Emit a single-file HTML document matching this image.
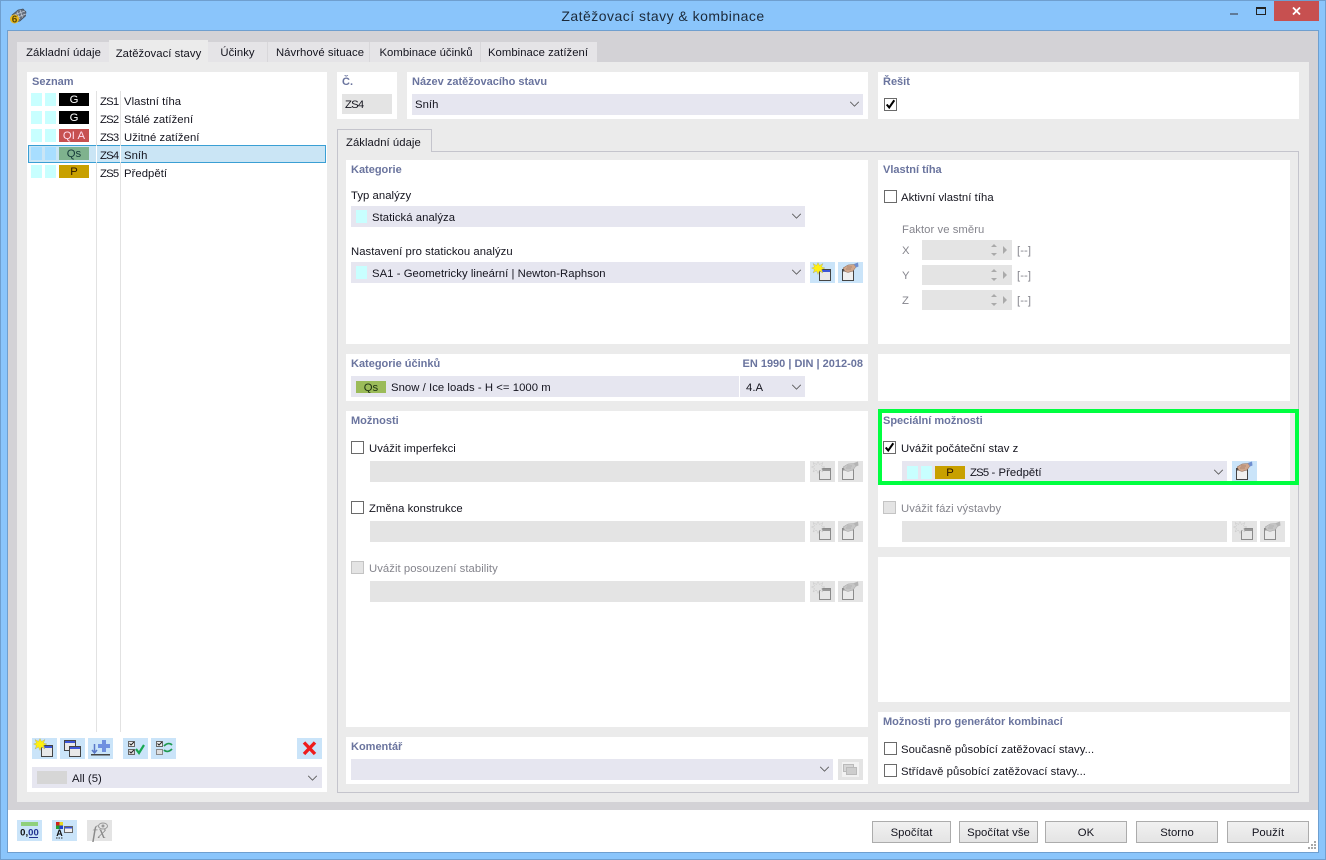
<!DOCTYPE html>
<html lang="cs"><head><meta charset="utf-8"><title>Zatěžovací stavy &amp; kombinace</title>
<style>
html,body{margin:0;padding:0;width:1326px;height:860px;overflow:hidden;background:#8ac5fb}
body{position:relative;font-family:"Liberation Sans",sans-serif;font-size:11.3px;letter-spacing:.05px;color:#14141e}
div,span,svg{position:absolute;box-sizing:border-box}
.t{white-space:nowrap;line-height:16px}
.z{letter-spacing:-.8px}
.h{white-space:nowrap;line-height:16px;font-weight:bold;color:#6a749e;font-size:11px;letter-spacing:0}
.w{background:#fff}
.f{background:#e6e6f0;height:21px}
.d{background:#e4e4e4;height:21px}
.g{color:#85858d}
.b{width:25px;height:21px;background:#cae4f9}
.b.x{background:#e4e4e4}
.b.x svg{filter:grayscale(1);opacity:.55}
.c{width:13px;height:13px;background:#fff;border:1px solid #6a6a6a}
.c.x{background:#e4e4e4;border-color:#c4c4c4}
.s{width:11px;height:13px;background:#c8ffff}
.chip{width:30px;height:13px;text-align:center;line-height:15px;font-size:11.3px;overflow:hidden}
.tab{top:42px;height:20px;background:#e5e4e7;line-height:23px;text-align:center;white-space:nowrap}
.btn{top:821px;height:22px;background:linear-gradient(#f1f1f1,#e4e4e4);border:1px solid #acacac;text-align:center;line-height:22px;white-space:nowrap}
.ck{left:0;top:0}
</style></head><body>
<svg width="0" height="0" style="left:0;top:0">
<defs>
<symbol id="chev" viewBox="0 0 12 7"><path d="M1 1L6 6L11 1" fill="none" stroke="#555" stroke-width="1"/></symbol>
<symbol id="new" viewBox="0 0 25 21"><rect x="9.500" y="7.500" width="11" height="11" fill="#e8e8e8" stroke="#444"/><rect x="10" y="8" width="10" height="2" fill="#3a55d8"/><path d="M8 .5L9.500 3.500L13 1.500L11.500 5L15 6L11.500 7.500L13 11L9.500 9L8 12.500L6.500 9L3 11L4.500 7.500L1.500 6L4.500 5L3 1.500L6.500 3.500Z" fill="#ffef10" stroke="#a8a878" stroke-width=".4"/></symbol>
<symbol id="edit" viewBox="0 0 25 21"><rect x="4.500" y="7.500" width="11" height="11" fill="#f0f0f0" stroke="#444"/><path d="M5 8h10v1.500H5z" fill="#555"/><path d="M5 6L10 3L16 2.500L18 5L15 9L10 10.500L7 9.500Z" fill="#cfa68c" stroke="#8a6a58" stroke-width=".5"/><path d="M9 5h5M8 7h5" stroke="#8a6a58" stroke-width=".5"/><path d="M16 2L20 .5L20.500 4.500L18 5.500Z" fill="#6f8fd0"/></symbol>
<symbol id="copy" viewBox="0 0 25 21"><rect x="4.500" y="2.500" width="11" height="10" fill="#e8e8e8" stroke="#444"/><rect x="5" y="3" width="10" height="2" fill="#3a55d8"/><rect x="9.500" y="8.500" width="11" height="10" fill="#e8e8e8" stroke="#444"/><rect x="10" y="9" width="10" height="2" fill="#3a55d8"/></symbol>
<symbol id="imp" viewBox="0 0 25 21"><path d="M14 2h4v4h4v4h-4v4h-4v-4h-4V6h4z" fill="#6f8fe0"/><path d="M6.500 6v9M4 12l2.500 3 2.500-3" fill="none" stroke="#5a78c8" stroke-width="1.500"/><rect x="3" y="16" width="19" height="1.500" fill="#444"/></symbol>
<symbol id="chk" viewBox="0 0 25 21"><rect x="5.500" y="3.500" width="6" height="5" fill="#eee" stroke="#666"/><rect x="5.500" y="11.500" width="6" height="5" fill="#ddd" stroke="#666"/><path d="M6.500 5.500l1.500 1.500 3-3M6.500 13.500l1.500 1.500 3-3" fill="none" stroke="#222"/><path d="M13 11l3 4 5-8" fill="none" stroke="#18a850" stroke-width="2.200"/></symbol>
<symbol id="tog" viewBox="0 0 25 21"><rect x="5.500" y="3.500" width="6" height="5" fill="#eee" stroke="#666"/><rect x="5.500" y="11.500" width="6" height="5" fill="#ddd" stroke="#888"/><path d="M6.500 5.500l1.500 1.500 3-3" fill="none" stroke="#222"/><path d="M13 8c3-3 6-3 8-1M21 11c-3 3-6 3-8 1" fill="none" stroke="#1f9a50" stroke-width="1.800"/></symbol>
<symbol id="del" viewBox="0 0 25 21"><path d="M7 4.500L18 16M18 4.500L7 16" stroke="#ee1c1c" stroke-width="3.400" fill="none"/></symbol>
<symbol id="tick" viewBox="0 0 13 13"><path d="M2 6.500L5 10L11 1.500" fill="none" stroke="#000" stroke-width="2.400"/></symbol>
<symbol id="cmt" viewBox="0 0 25 21"><rect x="4" y="3" width="17" height="15" fill="#fff"/><rect x="5.500" y="5.500" width="10" height="7" fill="#ccc" stroke="#999"/><rect x="8.500" y="8.500" width="10" height="7" fill="#bbb" stroke="#999"/></symbol>
</defs></svg>

<!-- window frame -->
<div style="left:0;top:0;width:1326px;height:1px;background:#6f9fcf"></div>
<div style="left:0;top:0;width:1px;height:860px;background:#6f9fcf"></div>
<div style="left:1325px;top:0;width:1px;height:860px;background:#6f9fcf"></div>
<div style="left:0;top:859px;width:1326px;height:1px;background:#6f9fcf"></div>
<div style="left:7px;top:30px;width:1312px;height:823px;background:#fff;border:1px solid #6f9fcf"></div>
<div style="left:8px;top:31px;width:1310px;height:779px;background:#d3d2d6"></div>

<!-- app icon -->
<svg style="left:9px;top:7px" width="18" height="18" viewBox="0 0 18 18"><path d="M3 8L9 3L14 2L17 5L16.500 9L11 14L7 15Z" fill="#66707e" stroke="#3c4450" stroke-width=".6"/><path d="M8 4.500L10.500 12M11 3L13.500 10.500M5 8L16 4M6 11L17 7" stroke="#c4ccd8" stroke-width=".7"/><circle cx="5.500" cy="12" r="4.500" fill="#e8b820"/><text x="5.500" y="15.500" font-size="10" font-weight="bold" text-anchor="middle" fill="#5a4800" font-family="Liberation Sans">6</text></svg>
<div class="t" style="left:0;width:1326px;top:8px;text-align:center;font-size:14px;line-height:16px;letter-spacing:.48px;color:#1c2a3a">Zatěžovací stavy &amp; kombinace</div>
<div style="left:1230px;top:13px;width:8px;height:2px;background:#5f7a98"></div>
<div style="left:1256px;top:7px;width:10px;height:8px;border:1px solid #222;border-top:2px solid #222"></div>
<div style="left:1274px;top:1px;width:45px;height:20px;background:#c75050"></div>
<svg style="left:1292px;top:7px" width="9" height="8" viewBox="0 0 9 8"><path d="M1 .5L8 7.500M8 .5L1 7.500" stroke="#fff" stroke-width="1.800"/></svg>

<!-- main tabs -->
<div style="left:17px;top:42px;width:580px;height:20px;background:#e5e4e7"></div>
<div class="tab" style="left:18px;width:91px">Základní údaje</div>
<div class="tab" style="left:109px;top:40px;height:23px;width:99px;background:#ebebeb;line-height:28px">Zatěžovací stavy</div>
<div class="tab" style="left:208px;width:59px">Účinky</div>
<div class="tab" style="left:268px;width:102px;padding-left:2px">Návrhové situace</div>
<div style="left:267px;top:42px;width:1px;height:20px;background:#d8d7da"></div>
<div style="left:369px;top:42px;width:1px;height:20px;background:#d8d7da"></div>
<div style="left:480px;top:42px;width:1px;height:20px;background:#d8d7da"></div>
<div class="tab" style="left:370px;width:110px;padding-left:2px;background:none">Kombinace účinků</div>
<div class="tab" style="left:481px;width:116px;padding-right:2px">Kombinace zatížení</div>
<div style="left:17px;top:62px;width:1292px;height:740px;background:#ebebeb"></div>

<!-- left panel -->
<div class="w" style="left:27px;top:72px;width:300px;height:720px"></div>
<div class="h" style="left:32px;top:74px">Seznam</div>
<div style="left:28px;top:145px;width:298px;height:18px;background:#cae5f5;border:1px solid #3a9fd4"></div>
<div style="left:96px;top:91px;width:1px;height:641px;background:#e2e2e2"></div>
<div style="left:120px;top:91px;width:1px;height:641px;background:#e2e2e2"></div>
<div style="left:96px;top:146px;width:1px;height:16px;background:#fff"></div>
<div style="left:120px;top:146px;width:1px;height:16px;background:#fff"></div>

<div class="s" style="left:31px;top:93px"></div><div class="s" style="left:45px;top:93px"></div>
<div class="chip" style="left:59px;top:93px;background:#000;color:#fff">G</div>
<div class="t z" style="left:100px;top:94px">ZS1</div><div class="t" style="left:124px;top:94px">Vlastní tíha</div>
<div class="s" style="left:31px;top:111px"></div><div class="s" style="left:45px;top:111px"></div>
<div class="chip" style="left:59px;top:111px;background:#000;color:#fff">G</div>
<div class="t z" style="left:100px;top:112px">ZS2</div><div class="t" style="left:124px;top:112px">Stálé zatížení</div>
<div class="s" style="left:31px;top:129px"></div><div class="s" style="left:45px;top:129px"></div>
<div class="chip" style="left:59px;top:129px;background:#c75050;color:#fde">QI A</div>
<div class="t z" style="left:100px;top:130px">ZS3</div><div class="t" style="left:124px;top:130px">Užitné zatížení</div>
<div class="s" style="left:31px;top:147px;background:#a8deff"></div><div class="s" style="left:45px;top:147px;background:#a8deff"></div>
<div class="chip" style="left:59px;top:147px;background:#7fb28e;color:#163a3a">Qs</div>
<div class="t z" style="left:100px;top:148px">ZS4</div><div class="t" style="left:124px;top:148px">Sníh</div>
<div class="s" style="left:31px;top:165px"></div><div class="s" style="left:45px;top:165px"></div>
<div class="chip" style="left:59px;top:165px;background:#c8a000;color:#2a1500">P</div>
<div class="t z" style="left:100px;top:166px">ZS5</div><div class="t" style="left:124px;top:166px">Předpětí</div>

<div class="b" style="left:32px;top:738px"><svg class="ck" width="25" height="21"><use href="#new"/></svg></div>
<div class="b" style="left:60px;top:738px"><svg class="ck" width="25" height="21"><use href="#copy"/></svg></div>
<div class="b" style="left:88px;top:738px"><svg class="ck" width="25" height="21"><use href="#imp"/></svg></div>
<div class="b" style="left:123px;top:738px"><svg class="ck" width="25" height="21"><use href="#chk"/></svg></div>
<div class="b" style="left:151px;top:738px"><svg class="ck" width="25" height="21"><use href="#tog"/></svg></div>
<div class="b" style="left:297px;top:738px"><svg class="ck" width="25" height="21"><use href="#del"/></svg></div>
<div class="f" style="left:32px;top:767px;width:290px"></div>
<div style="left:37px;top:771px;width:30px;height:13px;background:#d6d6d6"></div>
<div class="t" style="left:72px;top:771px">All (5)</div>
<svg style="left:307px;top:775px" width="11" height="6"><use href="#chev"/></svg>

<!-- top row -->
<div class="w" style="left:337px;top:72px;width:60px;height:47px"></div>
<div class="h" style="left:342px;top:74px">Č.</div>
<div class="d" style="left:342px;top:94px;width:50px;height:20px"></div>
<div class="t z" style="left:345px;top:97px">ZS4</div>
<div class="w" style="left:407px;top:72px;width:461px;height:47px"></div>
<div class="h" style="left:412px;top:74px">Název zatěžovacího stavu</div>
<div class="f" style="left:412px;top:94px;width:451px"></div>
<div class="t" style="left:415px;top:97px">Sníh</div>
<svg style="left:849px;top:101px" width="11" height="6"><use href="#chev"/></svg>
<div class="w" style="left:878px;top:72px;width:421px;height:47px"></div>
<div class="h" style="left:883px;top:74px">Řešit</div>
<div class="c" style="left:884px;top:98px"><svg class="ck" width="11" height="11" viewBox="0 0 13 13"><use href="#tick"/></svg></div>

<!-- inner tab -->
<div style="left:337px;top:151px;width:962px;height:642px;border:1px solid #c4c4cc"></div>
<div style="left:337px;top:129px;width:95px;height:23px;background:#ebebeb;border:1px solid #c4c4cc;border-bottom:none"></div>
<div class="t" style="left:346px;top:135px">Základní údaje</div>

<!-- Kategorie -->
<div class="w" style="left:346px;top:160px;width:522px;height:184px"></div>
<div class="h" style="left:351px;top:162px">Kategorie</div>
<div class="t" style="left:351px;top:188px">Typ analýzy</div>
<div class="f" style="left:351px;top:206px;width:454px"></div>
<div class="s" style="left:356px;top:210px"></div>
<div class="t" style="left:372px;top:210px">Statická analýza</div>
<svg style="left:791px;top:213px" width="11" height="6"><use href="#chev"/></svg>
<div class="t" style="left:351px;top:244px">Nastavení pro statickou analýzu</div>
<div class="f" style="left:351px;top:262px;width:454px"></div>
<div class="s" style="left:356px;top:266px"></div>
<div class="t" style="left:372px;top:266px">SA1 - Geometricky lineární | Newton-Raphson</div>
<svg style="left:791px;top:269px" width="11" height="6"><use href="#chev"/></svg>
<div class="b" style="left:810px;top:262px"><svg class="ck" width="25" height="21"><use href="#new"/></svg></div>
<div class="b" style="left:838px;top:262px"><svg class="ck" width="25" height="21"><use href="#edit"/></svg></div>

<!-- Vlastní tíha -->
<div class="w" style="left:878px;top:160px;width:412px;height:184px"></div>
<div class="h" style="left:883px;top:162px">Vlastní tíha</div>
<div class="c" style="left:884px;top:190px"></div>
<div class="t" style="left:901px;top:190px">Aktivní vlastní tíha</div>
<div class="t g" style="left:902px;top:222px">Faktor ve směru</div>
<div class="t g" style="left:902px;top:243px">X</div>
<div class="d" style="left:922px;top:240px;width:90px;height:20px"></div>
<div class="t g" style="left:1017px;top:243px">[--]</div>
<div class="t g" style="left:902px;top:268px">Y</div>
<div class="d" style="left:922px;top:265px;width:90px;height:20px"></div>
<div class="t g" style="left:1017px;top:268px">[--]</div>
<div class="t g" style="left:902px;top:293px">Z</div>
<div class="d" style="left:922px;top:290px;width:90px;height:20px"></div>
<div class="t g" style="left:1017px;top:293px">[--]</div>
<svg style="left:988px;top:240px" width="24" height="70" viewBox="0 0 24 70"><g fill="#aaa"><path d="M3 7l3-3 3 3zM3 13l3 3 3-3zM15 6l4 4-4 4z"/><path d="M3 32l3-3 3 3zM3 38l3 3 3-3zM15 31l4 4-4 4z"/><path d="M3 57l3-3 3 3zM3 63l3 3 3-3zM15 56l4 4-4 4z"/></g></svg>

<!-- Kategorie účinků -->
<div class="w" style="left:346px;top:354px;width:522px;height:47px"></div>
<div class="h" style="left:351px;top:356px">Kategorie účinků</div>
<div class="h" style="right:463px;top:356px">EN 1990 | DIN | 2012-08</div>
<div class="f" style="left:351px;top:376px;width:454px"></div>
<div style="left:739px;top:376px;width:1px;height:21px;background:#fff"></div>
<div class="chip" style="left:356px;top:381px;background:#9bbb59;color:#1c3010;height:12px;line-height:14px">Qs</div>
<div class="t" style="left:391px;top:380px">Snow / Ice loads - H &lt;= 1000 m</div>
<div class="t" style="left:746px;top:380px">4.A</div>
<svg style="left:791px;top:384px" width="11" height="6"><use href="#chev"/></svg>
<div class="w" style="left:878px;top:354px;width:412px;height:47px"></div>

<!-- Možnosti -->
<div class="w" style="left:346px;top:411px;width:522px;height:316px"></div>
<div class="h" style="left:351px;top:413px">Možnosti</div>
<div class="c" style="left:351px;top:441px"></div>
<div class="t" style="left:369px;top:441px">Uvážit imperfekci</div>
<div class="d" style="left:370px;top:461px;width:435px"></div>
<div class="b x" style="left:810px;top:461px"><svg class="ck" width="25" height="21"><use href="#new"/></svg></div>
<div class="b x" style="left:838px;top:461px"><svg class="ck" width="25" height="21"><use href="#edit"/></svg></div>
<div class="c" style="left:351px;top:501px"></div>
<div class="t" style="left:369px;top:501px">Změna konstrukce</div>
<div class="d" style="left:370px;top:521px;width:435px"></div>
<div class="b x" style="left:810px;top:521px"><svg class="ck" width="25" height="21"><use href="#new"/></svg></div>
<div class="b x" style="left:838px;top:521px"><svg class="ck" width="25" height="21"><use href="#edit"/></svg></div>
<div class="c x" style="left:351px;top:561px"></div>
<div class="t g" style="left:369px;top:561px">Uvážit posouzení stability</div>
<div class="d" style="left:370px;top:581px;width:435px"></div>
<div class="b x" style="left:810px;top:581px"><svg class="ck" width="25" height="21"><use href="#new"/></svg></div>
<div class="b x" style="left:838px;top:581px"><svg class="ck" width="25" height="21"><use href="#edit"/></svg></div>

<!-- Komentář -->
<div class="w" style="left:346px;top:737px;width:522px;height:47px"></div>
<div class="h" style="left:351px;top:739px">Komentář</div>
<div class="f" style="left:351px;top:759px;width:482px"></div>
<svg style="left:819px;top:766px" width="11" height="6"><use href="#chev"/></svg>
<div class="b x" style="left:838px;top:759px"><svg class="ck" width="25" height="21"><use href="#cmt"/></svg></div>

<!-- Speciální možnosti -->
<div class="w" style="left:878px;top:411px;width:412px;height:136px"></div>
<div class="h" style="left:883px;top:413px">Speciální možnosti</div>
<div class="c" style="left:883px;top:441px"><svg class="ck" width="11" height="11" viewBox="0 0 13 13"><use href="#tick"/></svg></div>
<div class="t" style="left:901px;top:441px">Uvážit počáteční stav z</div>
<div class="f" style="left:902px;top:461px;width:325px"></div>
<div class="s" style="left:907px;top:466px"></div><div class="s" style="left:921px;top:466px"></div>
<div class="chip" style="left:935px;top:466px;background:#c8a000;color:#2a1500">P</div>
<div class="t" style="left:970px;top:465px"><span class="z" style="position:static">ZS5</span> - Předpětí</div>
<svg style="left:1213px;top:469px" width="11" height="6"><use href="#chev"/></svg>
<div class="b" style="left:1232px;top:461px"><svg class="ck" width="25" height="21"><use href="#edit"/></svg></div>
<div class="c x" style="left:883px;top:501px"></div>
<div class="t g" style="left:901px;top:501px">Uvážit fázi výstavby</div>
<div class="d" style="left:902px;top:521px;width:325px"></div>
<div class="b x" style="left:1232px;top:521px"><svg class="ck" width="25" height="21"><use href="#new"/></svg></div>
<div class="b x" style="left:1260px;top:521px"><svg class="ck" width="25" height="21"><use href="#edit"/></svg></div>
<div style="left:878px;top:409px;width:421px;height:76px;border:4px solid #00ff40"></div>

<div class="w" style="left:878px;top:557px;width:412px;height:145px"></div>

<!-- Generátor -->
<div class="w" style="left:878px;top:712px;width:412px;height:72px"></div>
<div class="h" style="left:883px;top:714px">Možnosti pro generátor kombinací</div>
<div class="c" style="left:884px;top:742px"></div>
<div class="t" style="left:901px;top:742px">Současně působící zatěžovací stavy...</div>
<div class="c" style="left:884px;top:764px"></div>
<div class="t" style="left:901px;top:764px">Střídavě působící zatěžovací stavy...</div>

<!-- footer -->
<div class="b" style="left:17px;top:820px"><svg class="ck" width="25" height="21" viewBox="0 0 25 21"><rect x="4" y="2" width="17" height="4" fill="#8fd07c"/><text x="12.500" y="15.500" font-size="9.500" text-anchor="middle" fill="#111" font-family="Liberation Sans" font-weight="bold">0,<tspan fill="#203090">00</tspan></text><rect x="12" y="17" width="9" height="1" fill="#203090"/></svg></div>
<div class="b" style="left:52px;top:820px"><svg class="ck" width="25" height="21" viewBox="0 0 25 21"><rect x="4" y="2" width="3.500" height="3.500" fill="#d02020"/><rect x="7.500" y="2" width="3.500" height="3.500" fill="#e8d820"/><rect x="4" y="5.500" width="3.500" height="3.500" fill="#20a030"/><rect x="7.500" y="5.500" width="3.500" height="3.500" fill="#2040d0"/><text x="7.500" y="16" font-size="9" font-weight="bold" text-anchor="middle" fill="#111" font-family="Liberation Sans">A</text><path d="M4 18h1.500M6.500 18H8M9 18h1.500" stroke="#333"/><rect x="12.500" y="6.500" width="8" height="6" fill="#eee" stroke="#666"/><rect x="13" y="7" width="7" height="1.500" fill="#3a55d8"/></svg></div>
<div class="b x" style="left:87px;top:820px"></div>
<div class="t" style="left:92px;top:824px;font-family:'Liberation Serif',serif;font-style:italic;font-size:18px;letter-spacing:1px;color:#8a8a8a;line-height:16px">fx</div>
<svg style="left:98px;top:822px" width="10" height="8" viewBox="0 0 10 8"><ellipse cx="5" cy="4" rx="4.500" ry="3" fill="none" stroke="#999"/><circle cx="5" cy="4" r="1.500" fill="#999"/></svg>

<div class="btn" style="left:872px;width:79px">Spočítat</div>
<div class="btn" style="left:959px;width:79px">Spočítat vše</div>
<div class="btn" style="left:1045px;width:82px">OK</div>
<div class="btn" style="left:1136px;width:82px">Storno</div>
<div class="btn" style="left:1227px;width:82px">Použít</div>
<svg style="left:1306px;top:840px" width="11" height="11" viewBox="0 0 11 11"><g fill="#a8a8a8"><rect x="8" y="1" width="2" height="2"/><rect x="5" y="4" width="2" height="2"/><rect x="8" y="4" width="2" height="2"/><rect x="2" y="7" width="2" height="2"/><rect x="5" y="7" width="2" height="2"/><rect x="8" y="7" width="2" height="2"/></g></svg>
</body></html>
